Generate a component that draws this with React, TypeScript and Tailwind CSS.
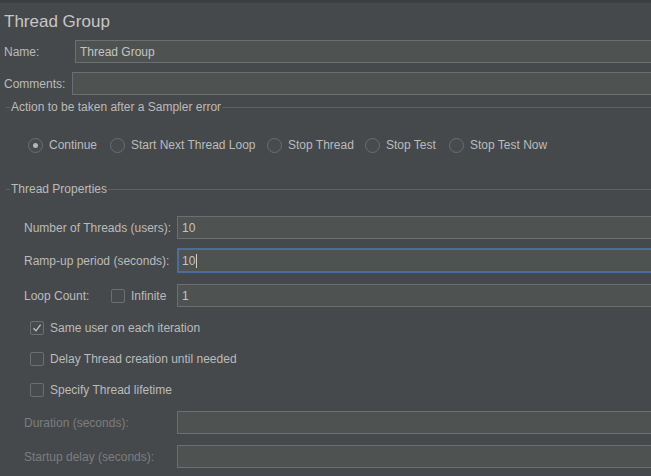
import React from "react";

const font = { fontFamily: '"Liberation Sans", Arial, sans-serif' };

function TextBox({ value, focused, caret }: { value?: string; focused?: boolean; caret?: boolean }) {
    if (focused) {
        return (
            <div className="flex-1 h-[25px] border-2 border-[#4b6d9b] bg-[#4e5351] flex items-center pl-[3px] text-[12px] text-[#c4c4c4]">
                {value}
                {caret && <span className="inline-block w-px h-[14px] bg-[#d0d0d0] ml-px"></span>}
            </div>
        );
    }
    return (
        <div className="flex-1 h-[23px] border border-[#6c6f71] bg-[#4e5351] flex items-center pl-[4px] text-[12px] text-[#c4c4c4]">
            {value}
        </div>
    );
}

function Radio({ checked, label, width }: { checked?: boolean; label: string; width: string }) {
    return (
        <div className={`flex items-center gap-[6px] ${width}`}>
            <span className="w-[15px] h-[15px] rounded-full border border-[#6c6f71] bg-[#474b4d] flex items-center justify-center shrink-0">
                {checked && <span className="w-[5px] h-[5px] rounded-full bg-[#b5b5b5]"></span>}
            </span>
            <span className="text-[12px] text-[#bbbbbb] whitespace-nowrap">{label}</span>
        </div>
    );
}

function Checkbox({ checked }: { checked?: boolean }) {
    return (
        <span className="w-[14px] h-[14px] rounded-[2px] border border-[#6c6f71] bg-[#474b4d] flex items-center justify-center shrink-0">
            {checked && (
                <svg width="10" height="10" viewBox="0 0 10 10">
                    <path d="M1.5 5.2 L4 7.8 L8.6 1.6" fill="none" stroke="#c2c2c2" strokeWidth="1.3" />
                </svg>
            )}
        </span>
    );
}

function SectionTitle({ title }: { title: string }) {
    return (
        <div className="flex items-center h-[14px] pl-[6px]">
            <span className="w-[4px] h-px bg-[#5f6264]"></span>
            <span className="text-[12px] text-[#bbbbbb] px-px whitespace-nowrap">{title}</span>
            <span className="flex-1 h-px bg-[#5f6264]"></span>
        </div>
    );
}

export default function App() {
    return (
        <div className="w-[651px] h-[476px] overflow-hidden bg-[#46494b]" style={font}>
            <div className="w-[668px]">
                <div className="h-[3px] bg-[#3c3f41]"></div>

                {/* Title */}
                <div className="h-[37px] flex items-center pl-[4px] text-[17px] text-[#c6c6c6]">Thread Group</div>

                {/* Name / Comments */}
                <div className="flex items-center pl-[4px]">
                    <span className="w-[71px] text-[12px] text-[#bbbbbb]">Name:</span>
                    <TextBox value="Thread Group" />
                </div>
                <div className="flex items-center pl-[4px] mt-[9px]">
                    <span className="w-[68px] text-[12px] text-[#bbbbbb]">Comments:</span>
                    <TextBox />
                </div>

                {/* Sampler error action */}
                <div className="mt-[5px]">
                    <SectionTitle title="Action to be taken after a Sampler error" />
                </div>
                <div className="flex items-center h-[16px] mt-[23px] pl-[28px]">
                    <Radio checked label="Continue" width="w-[82px]" />
                    <Radio label="Start Next Thread Loop" width="w-[157px]" />
                    <Radio label="Stop Thread" width="w-[98px]" />
                    <Radio label="Stop Test" width="w-[84px]" />
                    <Radio label="Stop Test Now" width="w-[120px]" />
                </div>

                {/* Thread properties */}
                <div className="mt-[29px]">
                    <SectionTitle title="Thread Properties" />
                </div>
                <div className="pl-[24px]">
                    <div className="flex items-center mt-[20px]">
                        <span className="w-[153px] text-[12px] text-[#bbbbbb]">Number of Threads (users):</span>
                        <TextBox value="10" />
                    </div>
                    <div className="flex items-center mt-[9px]">
                        <span className="w-[153px] text-[12px] text-[#bbbbbb]">Ramp-up period (seconds):</span>
                        <TextBox value="10" focused caret />
                    </div>
                    <div className="flex items-center mt-[11px]">
                        <span className="w-[87px] text-[12px] text-[#bbbbbb]">Loop Count:</span>
                        <Checkbox />
                        <span className="w-[52px] pl-[6px] text-[12px] text-[#bbbbbb]">Infinite</span>
                        <TextBox value="1" />
                    </div>

                    <div className="flex items-center gap-[6px] h-[14px] mt-[14px] pl-[6px]">
                        <Checkbox checked />
                        <span className="text-[12px] text-[#bbbbbb]">Same user on each iteration</span>
                    </div>
                    <div className="flex items-center gap-[6px] h-[14px] mt-[17px] pl-[6px]">
                        <Checkbox />
                        <span className="text-[12px] text-[#bbbbbb]">Delay Thread creation until needed</span>
                    </div>
                    <div className="flex items-center gap-[6px] h-[14px] mt-[17px] pl-[6px]">
                        <Checkbox />
                        <span className="text-[12px] text-[#bbbbbb]">Specify Thread lifetime</span>
                    </div>

                    <div className="flex items-center mt-[14px]">
                        <span className="w-[153px] text-[12px] text-[#7b7e80]">Duration (seconds):</span>
                        <TextBox />
                    </div>
                    <div className="flex items-center mt-[11px]">
                        <span className="w-[153px] text-[12px] text-[#7b7e80]">Startup delay (seconds):</span>
                        <TextBox />
                    </div>
                </div>
            </div>
        </div>
    );
}
